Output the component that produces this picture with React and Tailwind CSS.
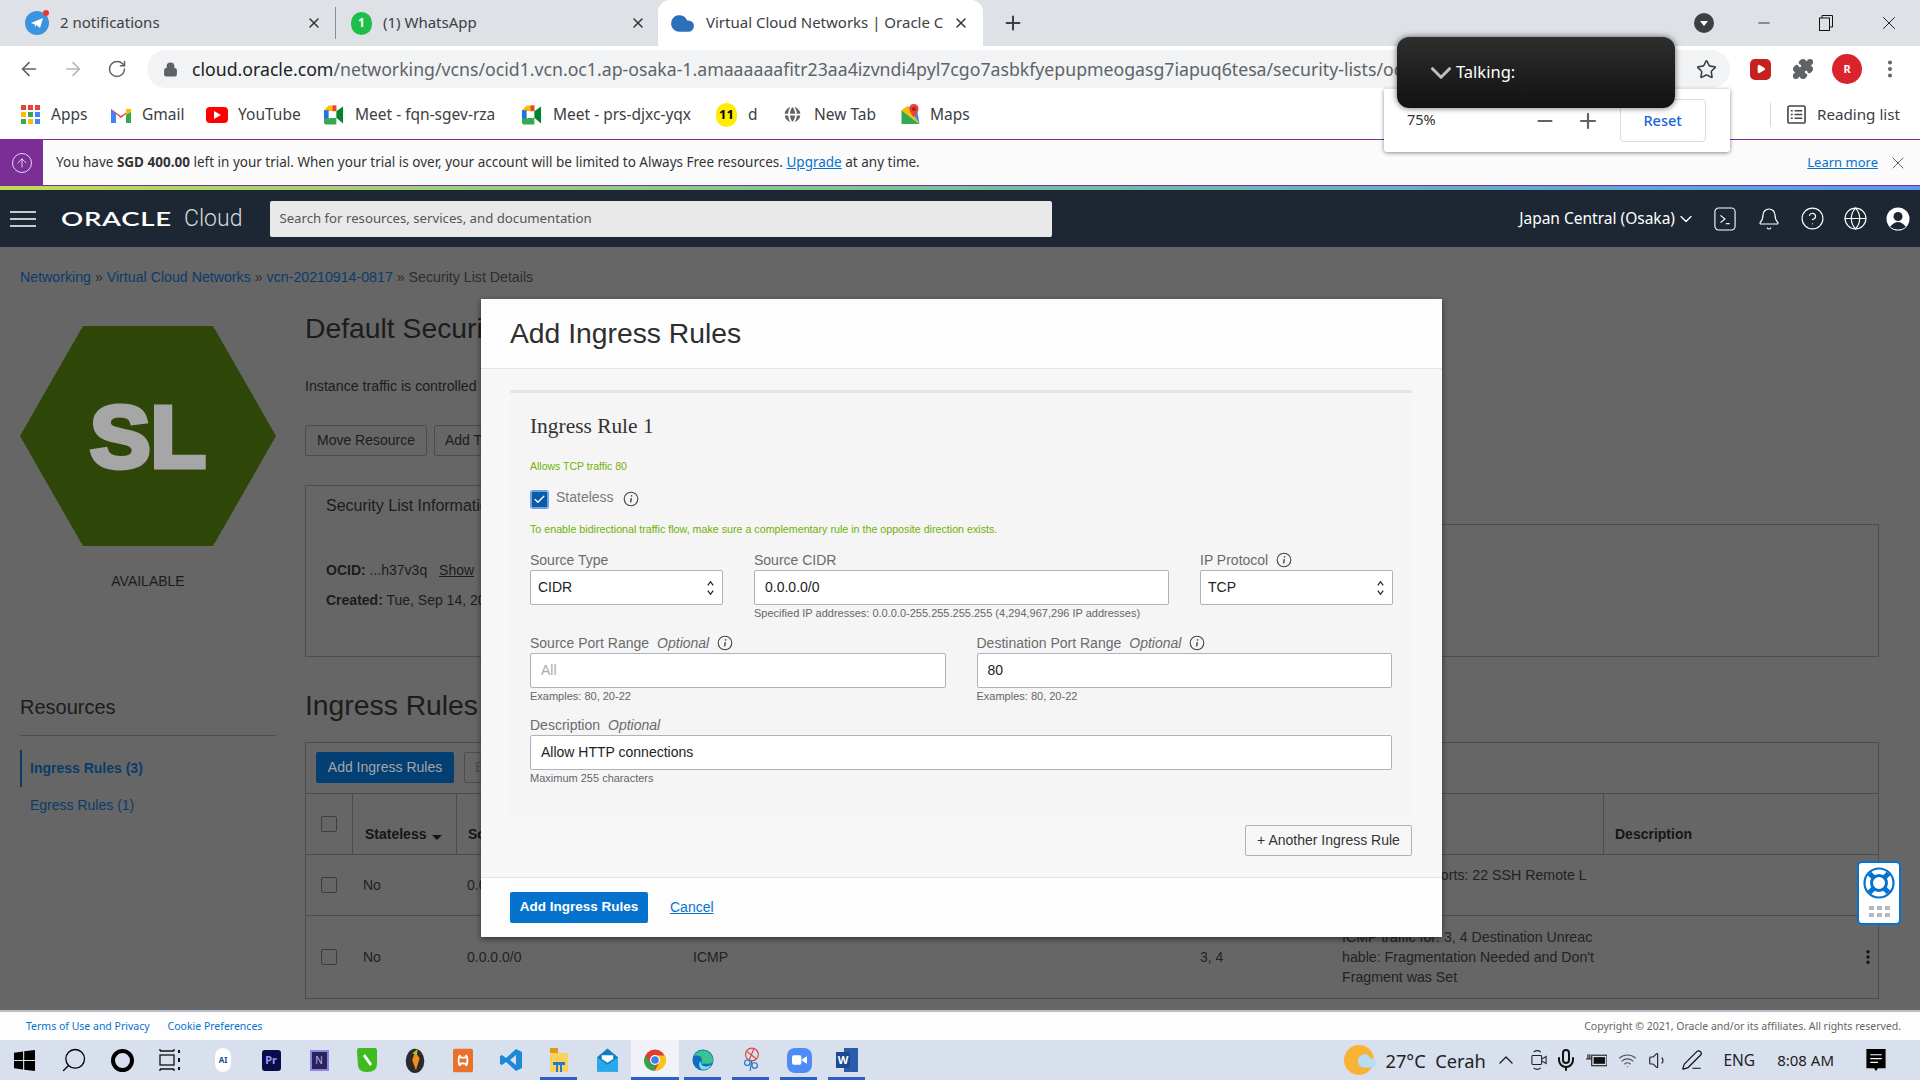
import React from 'react';
import { ArrowLeft, ArrowRight, RotateCw, Lock, Star, EllipsisVertical, Plus, Minus, X, Bell, CircleHelp, Globe, ChevronDown, ChevronUp, Check, Search, Puzzle, Cloud, ArrowUp, Mic, Wifi, Volume1, PenLine, Play } from 'lucide-react';

const chrome = { fontFamily: '"Noto Sans", sans-serif' };

const Info = ({ className = '' }) => (
  <svg viewBox="0 0 16 16" className={`w-[16px] h-[16px] shrink-0 ${className}`} fill="none" stroke="#444" strokeWidth="1.1">
    <circle cx="8" cy="8" r="6.8" />
    <path d="M8.3 7.2 L7.6 11.4" strokeWidth="1.4" />
    <circle cx="8.6" cy="4.9" r="0.8" fill="#444" stroke="none" />
  </svg>
);

const Updown = () => (
  <svg viewBox="0 0 10 20" className="w-[9px] h-[18px]" fill="none" stroke="#222" strokeWidth="1.4">
    <path d="M2 7 L5 3 L8 7" />
    <path d="M2 13 L5 17 L8 13" />
  </svg>
);

const Tab = ({ icon, title, width, pad, sep }) => (
  <div className={`flex items-center shrink-0 ${pad} ${sep ? 'border-r border-[#8a8d91] h-[32px]' : 'h-[46px]'}`} style={{ width }}>
    {icon}
    <span className="ml-[11px] -mt-[2px] text-[15px] text-[#3c4043] flex-1 whitespace-nowrap overflow-hidden">{title}</span>
    <X size={16} strokeWidth={2.2} className="text-[#333] ml-1 shrink-0" />
  </div>
);

const Bookmark = ({ icon, label, className = '' }) => (
  <div className={`flex items-center gap-[10px] h-full shrink-0 ${className}`}>
    {icon}
    <span className="text-[15.5px] text-[#3c4043] whitespace-nowrap">{label}</span>
  </div>
);

const MeetIcon = () => (
  <svg viewBox="0 0 22 20" className="w-[21px] h-[20px]">
    <path d="M1 5 L6 0 H14 V6 H7 V14 H1 Z" fill="#fbbc04" />
    <path d="M1 5 H6 V14 H1 Z" fill="#1a73e8" />
    <path d="M1 14 H7 V13 H14 V20 H4 Q1 20 1 17 Z" fill="#34a853" />
    <path d="M6 6 H14 V13 H6 Z" fill="#fff" />
    <path d="M14 6 L21 1 V19 L14 13 Z" fill="#00832d" />
    <path d="M14 0 V6 L10 6 V0 Z" fill="#ea4335" />
  </svg>
);

const AppsIcon = () => (
  <div className="grid grid-cols-3 gap-[2px] w-[19px]">
    {['#ea4335', '#ea4335', '#ea4335', '#fbbc04', '#34a853', '#4285f4', '#34a853', '#fbbc04', '#4285f4'].map((c, i) => (
      <span key={i} className="w-[5px] h-[5px]" style={{ background: c }} />
    ))}
  </div>
);

const Field = ({ label, optional, info, hint, value, placeholder, select }) => (
  <div className="min-w-0">
    <div className="flex items-center h-[20px] text-[14px] text-[#6b6b6b]">
      <span>{label}</span>
      {optional && <i className="ml-[8px]">Optional</i>}
      {info && <Info className="ml-[8px]" />}
    </div>
    <div className={`h-[35px] bg-white border border-[#aeb2bd] rounded-[2px] flex items-center justify-between text-[14px] ${select ? 'pl-[7px] pr-[7px]' : 'pl-[10px]'}`}>
      {value ? <span className="text-[#222]">{value}</span> : <span className="text-[#aaa]">{placeholder}</span>}
      {select && <Updown />}
    </div>
    {hint && <div className="h-[16px] leading-[16px] text-[11px] text-[#666] whitespace-nowrap">{hint}</div>}
  </div>
);

const HeaderRow = () => (
  <div className="flex h-[62px] border-t border-b border-[#4d4d4d] text-[14px] font-bold text-[#151515]">
    <div className="w-[47px] border-r border-[#4d4d4d] pl-[15px] pt-[22px]">
      <div className="w-[16px] h-[16px] border border-[#3d3d3d] rounded-[2px]" />
    </div>
    <div className="w-[104px] border-r border-[#4d4d4d] pl-[12px] flex items-end pb-[9px] gap-[6px]">
      Stateless
      <span className="mb-[5px] border-x-[5px] border-x-transparent border-t-[5px] border-t-[#151515]" />
    </div>
    <div className="w-[1147px] border-r border-[#4d4d4d] pl-[11px] flex items-end pb-[9px]">Source</div>
    <div className="flex-1 pl-[11px] flex items-end pb-[9px]">Description</div>
  </div>
);

const DataRow = ({ height, source, proto, code, lines }) => (
  <div className="flex items-center border-b border-[#4d4d4d] text-[14px] text-[#222]" style={{ height }}>
    <div className="w-[47px] pl-[15px]">
      <div className="w-[16px] h-[16px] border border-[#3d3d3d] rounded-[2px]" />
    </div>
    <div className="w-[114px] pl-[10px]">No</div>
    <div className="w-[226px]">{source}</div>
    <div className="w-[507px]">{proto}</div>
    <div className="w-[142px]">{code}</div>
    <div className="w-[272px] leading-[20px] text-[14.2px]">
      {lines.map((l) => <div key={l} className="whitespace-nowrap">{l}</div>)}
    </div>
    <div className="flex-1 flex justify-end pr-[1px]">
      {code === '3, 4' && <EllipsisVertical size={18} strokeWidth={2.5} className="text-[#111]" />}
    </div>
  </div>
);

const Sidebar = () => (
  <div className="w-[256px] shrink-0">
    <svg viewBox="0 0 256 220" className="mt-[39px] w-[256px] h-[220px] block">
      <polygon points="0,110 63,0 193,0 256,110 193,220 63,220" fill="#2e4708" />
      <text x="128" y="141" textAnchor="middle" fill="#a6a6a6" stroke="#a6a6a6" strokeWidth="5" fontSize="88" fontWeight="700" textLength="116" lengthAdjust="spacingAndGlyphs" fontFamily="Liberation Sans, sans-serif">SL</text>
    </svg>
    <div className="mt-[25px] h-[20px] leading-[20px] text-center text-[14px] text-[#1c1c1c]">AVAILABLE</div>
    <div className="mt-[102px] h-[43px] border-b border-[#4d4d4d] text-[20px] leading-[28px] text-[#1c1c1c]">Resources</div>
    <div className="mt-[14px] h-[37px] border-l-[2px] border-[#0a3b6b] pl-[8px] flex items-center text-[14px] font-bold text-[#0a3b6b]">Ingress Rules (3)</div>
    <div className="h-[37px] pl-[10px] flex items-center text-[14px] text-[#0a3b6b]">Egress Rules (1)</div>
  </div>
);

const PageContent = () => (
  <div className="ml-[29px] w-[1574px] shrink-0 text-[#1c1c1c]">
    <h1 className="mt-[23px] h-[36px] leading-[36px] text-[28.3px] whitespace-nowrap">Default Security List for vcn-20210914-0817</h1>
    <p className="mt-[30px] h-[20px] leading-[20px] text-[14.2px] whitespace-nowrap">Instance traffic is controlled by firewall rules</p>
    <div className="mt-[29px] flex gap-[7px] text-[14px]">
      <div className="w-[122px] h-[31px] border border-[#4d4d4d] rounded-[2px] flex items-center justify-center">Move Resource</div>
      <div className="w-[90px] h-[31px] border border-[#4d4d4d] rounded-[2px] pl-[10px] flex items-center">Add Tags</div>
    </div>
    <div className="mt-[29px] w-[300px] h-[40px] -mb-px relative z-10 bg-[#666666] border border-b-0 border-[#4d4d4d] pl-[20px] flex items-center text-[16px]">Security List Information</div>
    <div className="h-[133px] border border-[#4d4d4d] pl-[20px] pt-[35px] text-[14px]">
      <div className="h-[20px] leading-[20px]"><b>OCID:</b> ...h37v3q <u className="ml-[8px]">Show</u></div>
      <div className="mt-[10px] h-[20px] leading-[20px]"><b>Created:</b> Tue, Sep 14, 2021</div>
    </div>
    <h2 className="mt-[30px] h-[36px] leading-[36px] text-[28.3px]">Ingress Rules</h2>
    <div className="mt-[19px] border-x border-t border-[#4d4d4d] rounded-t-[2px]">
      <div className="h-[50px] flex items-start pt-[9px] pl-[10px] gap-[10px] text-[14px]">
        <div className="w-[138px] h-[31px] bg-[#043f73] text-[#a5a5a5] rounded-[2px] flex items-center justify-center">Add Ingress Rules</div>
        <div className="w-[60px] h-[31px] border border-[#4d4d4d] rounded-[2px] text-[#4d4d4d] pl-[10px] flex items-center">Edit</div>
      </div>
      <HeaderRow />
      <DataRow height={61} source="0.0.0.0/0" proto="TCP" code="22" lines={['TCP traffic for ports: 22 SSH Remote L', 'ogin Protocol']} />
      <DataRow height={83} source="0.0.0.0/0" proto="ICMP" code="3, 4" lines={['ICMP traffic for: 3, 4 Destination Unreac', "hable: Fragmentation Needed and Don't", 'Fragment was Set']} />
    </div>
  </div>
);

const Modal = () => (
  <div className="absolute z-20 left-[481px] top-[52px] w-[961px] h-[638px] bg-[#f7f7f7] shadow-[0_2px_6px_rgba(0,0,0,0.5)] flex flex-col rounded-[1px]">
    <div className="h-[70px] shrink-0 bg-[#fdfdfd] border-b border-[#e4e4e4] pl-[29px] flex items-center text-[28.3px] text-[#2e2e2e]">Add Ingress Rules</div>
    <div className="flex-1 pl-[29px] pr-[30px] pt-[21px]">
      <div className="h-[427px] bg-[#f5f5f6] border-t-[3px] border-[#e3e3e8] rounded-t-[2px] px-[20px] pt-[19px]">
        <div className="h-[28px] text-[21.4px] leading-[28px] text-[#333]" style={{ fontFamily: '"Liberation Serif", serif' }}>Ingress Rule 1</div>
        <div className="mt-[19px] h-[14px] leading-[14px] text-[10.5px] text-[#6fb300]">Allows TCP traffic 80</div>
        <div className="mt-[16px] h-[20px] flex items-center">
          <div className="w-[19px] h-[19px] rounded-[3px] bg-[#0a5aa8] border-[2px] border-[#6aa5e6] flex items-center justify-center">
            <Check size={13} strokeWidth={2.5} className="text-white" />
          </div>
          <span className="ml-[7px] text-[14px] text-[#7a7a7a] -mt-[3px]">Stateless</span>
          <Info className="ml-[9px]" />
        </div>
        <div className="mt-[13px] h-[14px] leading-[14px] text-[10.7px] text-[#6fb300] whitespace-nowrap">To enable bidirectional traffic flow, make sure a complementary rule in the opposite direction exists.</div>
        <div className="mt-[14px] grid grid-cols-[193px_415px_193px] gap-x-[31px]">
          <Field label="Source Type" value="CIDR" select />
          <Field label="Source CIDR" value="0.0.0.0/0" hint="Specified IP addresses: 0.0.0.0-255.255.255.255 (4,294,967,296 IP addresses)" />
          <Field label="IP Protocol" info value="TCP" select />
        </div>
        <div className="mt-[12px] grid grid-cols-2 gap-x-[31px]">
          <Field label="Source Port Range" optional info placeholder="All" hint="Examples: 80, 20-22" />
          <Field label="Destination Port Range" optional info value="80" hint="Examples: 80, 20-22" />
        </div>
        <div className="mt-[11px]">
          <Field label="Description" optional value="Allow HTTP connections" hint="Maximum 255 characters" />
        </div>
      </div>
      <div className="mt-[8px] flex justify-end">
        <div className="w-[167px] h-[31px] border border-[#aeb2bd] rounded-[2px] bg-[#f7f7f7] flex items-center justify-center text-[14px] text-[#333]">+ Another Ingress Rule</div>
      </div>
    </div>
    <div className="h-[60px] shrink-0 bg-[#fdfdfd] border-t border-[#e4e4e4] pl-[29px] flex items-center">
      <div className="w-[138px] h-[31px] bg-[#0572ce] rounded-[2px] flex items-center justify-center text-[13.5px] font-bold text-white">Add Ingress Rules</div>
      <a className="ml-[22px] text-[14px] text-[#0572ce] underline">Cancel</a>
    </div>
  </div>
);

const HelpWidget = () => (
  <div className="absolute z-20 left-[1857px] top-[614px] w-[44px] h-[64px] bg-white border-[2px] border-[#0572ce] rounded-[5px] flex flex-col items-center pt-[4px]">
    <svg viewBox="0 0 32 32" className="w-[32px] h-[32px]" fill="none" stroke="#0572ce">
      <circle cx="16" cy="16" r="14.5" strokeWidth="2.2" />
      <circle cx="16" cy="16" r="7.5" strokeWidth="3" />
      <path d="M6.5 6.5 L11 11 M25.5 6.5 L21 11 M6.5 25.5 L11 21 M25.5 25.5 L21 21" strokeWidth="5" />
    </svg>
    <div className="mt-[7px] grid grid-cols-3 gap-x-[3px] gap-y-[3px]">
      {[0, 1, 2, 3, 4, 5].map((i) => <span key={i} className="w-[5px] h-[4px] bg-[#b5b8c0]" />)}
    </div>
  </div>
);

const TaskIcon = ({ children, active, bar }) => (
  <div className={`relative w-[48px] h-full shrink-0 flex items-center justify-center ${active ? 'bg-[#f1f2f7]' : ''}`}>
    {children}
    {bar && <span className={`absolute bottom-0 h-[3px] bg-[#2b5fc7] ${active ? 'inset-x-0' : 'left-[5px] right-[6px]'}`} />}
  </div>
);

const Taskbar = () => (
  <div className="h-[40px] shrink-0 bg-[#d8dfed] flex items-center" style={chrome}>
    <TaskIcon>
      <svg viewBox="0 0 22 22" className="w-[21px] h-[21px]" fill="#000"><path d="M0 3 L9.5 1.6 V10.4 H0 Z M10.7 1.4 L22 0 V10.4 H10.7 Z M0 11.6 H9.5 V20.4 L0 19 Z M10.7 11.6 H22 V22 L10.7 20.6 Z" /></svg>
    </TaskIcon>
    <div className="w-[2px]" />
    <TaskIcon><Search size={28} strokeWidth={1.1} className="text-black -scale-x-100" /></TaskIcon>
    <TaskIcon><span className="w-[23px] h-[23px] rounded-full border-[4px] border-black" /></TaskIcon>
    <TaskIcon>
      <svg viewBox="0 0 24 24" className="w-[24px] h-[24px]" fill="none" stroke="#111" strokeWidth="1.3">
        <rect x="2" y="7" width="14" height="10" />
        <path d="M2 3 H16 M2 21 H16 M2 1 V3 M16 1 V3 M2 21 V23 M16 21 V23" />
        <path d="M21 2 V5 M21 10 V14 M21 19 V22" strokeWidth="2" />
      </svg>
    </TaskIcon>
    <div className="w-[5px]" />
    <TaskIcon><span className="w-[16px] h-[24px] rounded-[8px] bg-white flex items-center justify-center text-[8px] font-bold text-[#124a8c]">AI</span></TaskIcon>
    <TaskIcon><span className="w-[19px] h-[21px] rounded-[3px] bg-[#0b0b48] text-[#9a9aff] text-[11px] font-bold flex items-center justify-center">Pr</span></TaskIcon>
    <TaskIcon><span className="w-[19px] h-[21px] border-[2px] border-[#8d84e8] bg-[#2a2456] text-[#b9b0ff] text-[10px] flex items-center justify-center">N</span></TaskIcon>
    <TaskIcon>
      <svg viewBox="0 0 20 24" className="w-[20px] h-[24px]"><path d="M2 0 H18 Q20 0 20 3 V16 Q20 24 10 24 Q2 24 1 18 L0 3 Q0 0 2 0 Z" fill="#3dbb1f" /><path d="M8 6 L15 16 L13 18 L6 8 Z" fill="#fff" /></svg>
    </TaskIcon>
    <TaskIcon>
      <svg viewBox="0 0 20 28" className="w-[20px] h-[26px]"><ellipse cx="10" cy="15" rx="10" ry="13" fill="#2b2b2b" /><path d="M10 5 L15 12 L11 25 L7 14 Z" fill="#f68b1f" /><path d="M7 7 L13 2 L12 8 Z" fill="#9acd32" /></svg>
    </TaskIcon>
    <TaskIcon>
      <svg viewBox="0 0 22 26" className="w-[20px] h-[25px]"><rect width="22" height="26" rx="2" fill="#e8712b" /><path d="M6 8 Q11 12 16 8 M6 18 Q11 14 16 18 M8 7 Q4 13 8 19 M14 7 Q18 13 14 19" stroke="#fff" strokeWidth="2" fill="none" /></svg>
    </TaskIcon>
    <TaskIcon>
      <svg viewBox="0 0 24 24" className="w-[24px] h-[24px]"><path d="M17 1 L23 4 V20 L17 23 L7 14 L3 17 L1 16 V8 L3 7 L7 10 Z M17 7 L11 12 L17 17 Z" fill="#1c8ad6" /></svg>
    </TaskIcon>
    <TaskIcon bar>
      <svg viewBox="0 0 20 24" className="w-[20px] h-[24px]"><path d="M1 0 H9 V5 H1 Z" fill="#dd9a15" /><path d="M1 5 H19 V24 H1 Z" fill="#fcd25f" /><path d="M7 14 H13 V24 H11 V17 H9 V24 H7 Z" fill="#2a78c8" /><path d="M4 14 H16 V17 H4 Z" fill="#2a78c8" /></svg>
    </TaskIcon>
    <TaskIcon>
      <svg viewBox="0 0 22 24" className="w-[21px] h-[24px]"><path d="M0 9 L11 0 L22 9 V24 H0 Z" fill="#0f7dc2" /><path d="M0 9 L11 17 L22 9 V24 H0 Z" fill="#28a8ea" /><path d="M5 7 H17 V11 L11 15 L5 11 Z" fill="#fff" /></svg>
    </TaskIcon>
    <TaskIcon active bar>
      <svg viewBox="0 0 24 24" className="w-[22px] h-[22px]">
        <circle cx="12" cy="12" r="11.5" fill="#e33b2e" />
        <path d="M12 12 L2 19 A11.5 11.5 0 0 0 12 23.5 Z M2 19 A11.5 11.5 0 0 1 1.7 7 L7 15 Z" fill="#2ea44f" />
        <path d="M12 7 H23 A11.5 11.5 0 0 1 12 23.5 L17 14 Z" fill="#fbc116" />
        <circle cx="12" cy="12" r="5.5" fill="#fff" />
        <circle cx="12" cy="12" r="4.2" fill="#3b82f0" />
      </svg>
    </TaskIcon>
    <TaskIcon bar>
      <svg viewBox="0 0 24 24" className="w-[22px] h-[24px]">
        <circle cx="12" cy="12" r="11.5" fill="#0f6fbc" />
        <path d="M2 8 A11 11 0 0 1 23 12 Q23 16 18 16 H10 Q12 11 9 8 Q5 6 2 8 Z" fill="#39c38f" />
        <path d="M9 13 Q10 20 17 19 Q20 18 21 17 Q18 24 10 22 Q6 18 9 13 Z" fill="#7ee0ef" />
      </svg>
    </TaskIcon>
    <TaskIcon bar>
      <svg viewBox="0 0 24 28" className="w-[22px] h-[26px]" fill="none" stroke="#dc4a45" strokeWidth="1.3">
        <circle cx="13" cy="8" r="7" /><path d="M8 5 L18 13 M15 2 L10 14" />
        <circle cx="8" cy="17" r="3" stroke="#2a78c8" /><circle cx="16" cy="20" r="3" stroke="#2a78c8" /><path d="M13 14 L11 26" stroke="#2a78c8" />
      </svg>
    </TaskIcon>
    <TaskIcon bar>
      <div className="w-[25px] h-[25px] rounded-[8px] bg-[#4d8cf5] flex items-center justify-center">
        <svg viewBox="0 0 16 10" className="w-[15px] h-[10px]" fill="#fff"><rect width="10" height="10" rx="2" /><path d="M11 4 L16 1 V9 L11 6 Z" /></svg>
      </div>
    </TaskIcon>
    <TaskIcon bar>
      <div className="relative w-[22px] h-[24px]">
        <span className="absolute right-0 top-0 w-[14px] h-[24px] bg-[#2a5cab]" />
        <span className="absolute left-0 top-[4px] w-[14px] h-[16px] bg-[#1a4a93] text-white text-[11px] font-bold flex items-center justify-center">W</span>
      </div>
    </TaskIcon>
    <div className="flex-1" />
    <div className="w-[30px] h-[30px] rounded-full bg-[#f9b233] relative flex items-center justify-center mr-[11px]">
      <Cloud size={20} className="absolute right-[-3px] top-[6px] text-[#b9dcf5] fill-[#b9dcf5]" />
    </div>
    <span className="text-[18.3px] text-[#222] w-[109px] whitespace-nowrap mt-[1px]">27°C&nbsp; Cerah</span>
    <ChevronUp size={24} strokeWidth={1.4} className="text-[#222] mr-[13px]" />
    <svg viewBox="0 0 18 24" className="w-[16px] h-[22px] mr-[7px]" fill="none" stroke="#222" strokeWidth="1.2"><rect x="1" y="7" width="11" height="10" rx="1" /><path d="M12 11 L17 8 V16 L12 13" /><path d="M3 3 Q7 0 11 3 M3 21 Q7 24 11 21" /></svg>
    <Mic size={24} strokeWidth={2} className="text-[#111] mr-[8px]" />
    <svg viewBox="0 0 22 16" className="w-[21px] h-[16px] mr-[11px]"><rect x="6" y="3" width="16" height="11" fill="none" stroke="#222" strokeWidth="1.2" /><rect x="8" y="5" width="12" height="7" fill="#111" /><path d="M0 7 H6 M2 2 V7 M4 2 V7" stroke="#222" strokeWidth="1.2" /></svg>
    <Wifi size={19} strokeWidth={1.4} className="text-[#555] mr-[11px]" />
    <Volume1 size={21} strokeWidth={1.3} className="text-[#222] mr-[12px]" />
    <PenLine size={22} strokeWidth={1.3} className="text-[#111] mr-[20px]" />
    <span className="text-[15.5px] text-[#222] mr-[22px] mt-[1px]">ENG</span>
    <span className="text-[15px] text-[#222] mr-[32px] whitespace-nowrap">8:08 AM</span>
    <svg viewBox="0 0 20 24" className="w-[20px] h-[23px] mr-[34px]"><path d="M0 0 H20 V20 H12 L10 23 L8 20 H0 Z" fill="#000" /><path d="M4 6 H16 M4 10 H16 M4 14 H12" stroke="#fff" strokeWidth="1.2" /></svg>
  </div>
);

export default function App() {
  return (
    <div className="w-[1920px] h-screen overflow-hidden flex flex-col relative bg-white" style={{ fontFamily: '"Liberation Sans", Arial, sans-serif' }}>
      {/* browser chrome */}
      <div style={chrome}>
        <div className="h-[46px] bg-[#dee1e6] flex items-center">
          <Tab width={336} pad="pl-[25px] pr-[13px]" sep title="2 notifications" icon={
            <span className="relative w-[24px] h-[24px] rounded-full bg-[#3a94e0] flex items-center justify-center shrink-0">
              <svg viewBox="0 0 14 14" className="w-[14px] h-[14px]"><path d="M1 7 L13 2 L10 12 L6.5 9 L5 11 L4.8 8.4 Z" fill="#fff" /></svg>
              <span className="absolute -top-[1px] right-[0px] w-[6px] h-[6px] rounded-full bg-[#e8362d]" />
            </span>
          } />
          <Tab width={322} pad="pl-[15px] pr-[12px]" title="(1) WhatsApp" icon={
            <span className="w-[21px] h-[23px] rounded-full bg-[#1ebe4a] text-white text-[12px] font-bold flex items-center justify-center shrink-0">1</span>
          } />
          <Tab width={325} pad="bg-white rounded-t-xl pl-[16px] pr-[14px]" title="Virtual Cloud Networks | Oracle C" icon={
            <Cloud size={25} className="text-[#2c6fbb] fill-[#2c6fbb] shrink-0 ml-[-4px]" />
          } />
          <Plus size={22} strokeWidth={2.2} className="text-[#3c4043] ml-[19px]" />
          <div className="flex-1" />
          <span className="w-[20px] h-[20px] rounded-full bg-[#3c4043] flex items-center justify-center mr-[41px]">
            <span className="border-x-[4px] border-x-transparent border-t-[5px] border-t-white" />
          </span>
          <Minus size={18} strokeWidth={1.1} className="text-[#111] mr-[46px]" />
          <svg viewBox="0 0 14 16" className="w-[14px] h-[16px] mr-[45px]" fill="none" stroke="#111" strokeWidth="1"><rect x="0.5" y="3" width="10" height="12.5" /><path d="M3 3 V0.5 H13.5 V12 H10.5" /></svg>
          <X size={22} strokeWidth={1} className="text-[#111] mr-[20px]" />
        </div>
        <div className="h-[46px] bg-white flex items-center pl-[18px]">
          <ArrowLeft size={22} strokeWidth={1.8} className="text-[#5f6368]" />
          <ArrowRight size={22} strokeWidth={1.8} className="text-[#b5b7ba] ml-[22px]" />
          <RotateCw size={20} strokeWidth={1.8} className="text-[#5f6368] ml-[23px]" />
          <div className="ml-[20px] w-[1583px] h-[38px] rounded-full bg-[#f1f3f4] flex items-center pl-[16px] pr-[14px] overflow-hidden">
            <Lock size={15} strokeWidth={2.5} className="text-[#5f6368] shrink-0 fill-[#5f6368]" />
            <span className="ml-[14px] text-[17.7px] text-[#5f6368] whitespace-nowrap overflow-hidden flex-1">
              <span className="text-[#202124]">cloud.oracle.com</span>/networking/vcns/ocid1.vcn.oc1.ap-osaka-1.amaaaaaafitr23aa4izvndi4pyl7cgo7asbkfyepupmeogasg7iapuq6tesa/security-lists/ocid1.securitylist
            </span>
            <Star size={21} strokeWidth={1.8} className="text-[#3c4043] shrink-0 ml-[6px] -mr-[1px]" />
          </div>
          <span className="ml-[20px] w-[21px] h-[21px] rounded-[5px] bg-[#c5221f] flex items-center justify-center">
            <Play size={10} className="text-white fill-white" />
          </span>
          <Puzzle size={22} className="ml-[21px] text-[#5f6368] fill-[#5f6368]" />
          <span className="ml-[18px] w-[30px] h-[30px] rounded-full bg-[#d9232d] text-white text-[11px] font-bold flex items-center justify-center">R</span>
          <EllipsisVertical size={22} strokeWidth={2.4} className="ml-[17px] text-[#5f6368]" />
        </div>
        <div className="h-[47px] bg-white flex items-center pl-[21px] pb-[2px]">
          <Bookmark icon={<AppsIcon />} label="Apps" className="w-[90px] gap-[11px]" />
          <Bookmark className="w-[95px] gap-[11px]" label="Gmail" icon={
            <svg viewBox="0 0 20 16" className="w-[20px] h-[16px]">
              <path d="M0 2 L10 9 L20 2 V16 H15 V7 L10 11 L5 7 V16 H0 Z" fill="#ea4335" />
              <path d="M0 2 V16 H5 V7 Z" fill="#4285f4" /><path d="M20 2 V16 H15 V7 Z" fill="#34a853" /><path d="M15 2 L20 2 V5 L15 8 Z" fill="#fbbc04" />
            </svg>
          } />
          <Bookmark className="w-[117px] gap-[10px]" label="YouTube" icon={
            <span className="w-[22px] h-[16px] rounded-[4px] bg-[#f00] flex items-center justify-center"><span className="border-y-[4px] border-y-transparent border-l-[7px] border-l-white" /></span>
          } />
          <Bookmark className="w-[198px] gap-[11px]" icon={<MeetIcon />} label="Meet - fqn-sgev-rza" />
          <Bookmark className="w-[195px] gap-[11px]" icon={<MeetIcon />} label="Meet - prs-djxc-yqx" />
          <Bookmark className="w-[66px] gap-[11px]" label="d" icon={
            <span className="w-[21px] h-[24px] rounded-full bg-[#ffec00] text-black text-[13px] font-bold flex items-center justify-center">11</span>
          } />
          <Bookmark className="w-[117px] gap-[11px]" icon={<Globe size={21} className="text-white fill-[#5f6368]" />} label="New Tab" />
          <Bookmark className="gap-[10px]" label="Maps" icon={
            <svg viewBox="0 0 20 22" className="w-[21px] h-[22px]">
              <path d="M2 6 L20 20 H2 Z" fill="#34a853" /><path d="M2 6 L8 2 L20 20 Z" fill="#fbbc04" /><path d="M8 2 L18 8 L20 20 Z" fill="#4285f4" />
              <path d="M14 0 Q19 0 19 5 Q19 8 14 13 Q10 8 10 5 Q10 0 14 0 Z" fill="#ea4335" /><circle cx="14.5" cy="5" r="2" fill="#a52714" />
            </svg>
          } />
          <div className="flex-1" />
          <span className="h-[24px] border-l border-[#d5d7da] mr-[16px]" />
          <svg viewBox="0 0 20 20" className="w-[19px] h-[19px] mr-[11px]" fill="none" stroke="#444" strokeWidth="1.7">
            <rect x="1" y="1" width="18" height="18" rx="1.5" /><path d="M4 6 H6 M8 6 H16 M4 10 H6 M8 10 H16 M4 14 H6 M8 14 H16" />
          </svg>
          <span className="text-[15.2px] text-[#3c4043] mr-[20px] whitespace-nowrap">Reading list</span>
        </div>
      </div>

      {/* trial banner */}
      <div className="h-[47px] border-y border-[#7a2e96] bg-[#fbfbfb] flex items-center shrink-0" style={chrome}>
        <div className="w-[43px] h-full bg-[#7a2e96] flex items-center justify-center">
          <span className="w-[20px] h-[20px] rounded-full border border-white/80 flex items-center justify-center">
            <ArrowUp size={14} strokeWidth={1.3} className="text-white" />
          </span>
        </div>
        <p className="ml-[13px] text-[13.5px] text-[#333] whitespace-nowrap">You have <b>SGD 400.00</b> left in your trial. When your trial is over, your account will be limited to Always Free resources. <a className="text-[#0572ce] underline">Upgrade</a> at any time.</p>
        <div className="flex-1" />
        <a className="text-[13px] text-[#0572ce] underline">Learn more</a>
        <X size={20} strokeWidth={1} className="text-[#444] ml-[10px] mr-[12px]" />
      </div>
      <div className="h-[4px] shrink-0 bg-gradient-to-r from-[#bcdc54] via-[#78c19b] to-[#5a98ee]" />

      {/* oracle nav */}
      <div className="h-[57px] shrink-0 bg-[#1c2733] flex items-center text-white">
        <svg viewBox="0 0 26 16" className="w-[26px] h-[16px] ml-[10px]" stroke="#fff" strokeWidth="1.3"><path d="M0 1 H26 M0 8 H26 M0 15 H26" /></svg>
        <span className="ml-[25px] -mt-[2px] w-[117px] inline-block origin-left scale-x-[1.38] text-[20px] font-semibold tracking-[0.5px] whitespace-nowrap" style={{ fontFamily: 'Lato, sans-serif' }}>ORACLE</span>
        <span className="ml-[6px] mt-[1px] text-[23px] font-light text-[#d5d7da]" style={{ fontFamily: 'Roboto, sans-serif' }}>Cloud</span>
        <div className="ml-[28px] w-[782px] h-[36px] rounded-[2px] bg-[#e9e9e9] flex items-center pl-[9px] text-[13.2px] text-[#555]" style={chrome}>Search for resources, services, and documentation</div>
        <div className="flex-1" />
        <span className="text-[15.5px] whitespace-nowrap" style={chrome}>Japan Central (Osaka)</span>
        <ChevronDown size={20} strokeWidth={1.6} className="ml-[1px] mr-[18px]" />
        <svg viewBox="0 0 24 26" className="w-[22px] h-[24px] mr-[21px]" fill="none" stroke="#fff" strokeWidth="1.2"><rect x="1" y="1" width="22" height="24" rx="4" /><path d="M7 9 L12 13 L7 17 M13 18 H17" /></svg>
        <Bell size={24} strokeWidth={1.2} className="mr-[19px]" />
        <CircleHelp size={25} strokeWidth={1.1} className="mr-[18px]" />
        <Globe size={25} strokeWidth={1.1} className="mr-[18px]" />
        <svg viewBox="0 0 24 24" className="w-[24px] h-[24px] mr-[10px]"><circle cx="12" cy="12" r="11.5" fill="#fff" /><circle cx="12" cy="9.5" r="4.5" fill="#1c2733" /><path d="M4 20 Q12 10 20 20 Q12 25 4 20 Z" fill="#1c2733" /></svg>
      </div>

      {/* console page under the dialog */}
      <div className="relative flex-1 min-h-0 bg-[#666666] overflow-hidden">
        <div className="pl-[20px] pt-[20px]">
          <div className="h-[20px] leading-[20px] text-[14.2px] text-[#2d2d2d] whitespace-nowrap">
            <span className="text-[#0a3b6b]">Networking</span> » <span className="text-[#0a3b6b]">Virtual Cloud Networks</span> » <span className="text-[#0a3b6b]">vcn-20210914-0817</span> » Security List Details
          </div>
          <div className="flex">
            <Sidebar />
            <PageContent />
          </div>
        </div>
        <Modal />
        <HelpWidget />
      </div>

      {/* footer */}
      <div className="h-[30px] shrink-0 bg-[#fdfdfd] border-t-[2px] border-[#b7bcc6] flex items-center pl-[26px] pr-[19px] pt-[1px] text-[10.5px]" style={chrome}>
        <a className="text-[#0572ce]">Terms of Use and Privacy</a>
        <a className="ml-[18px] text-[#0572ce]">Cookie Preferences</a>
        <div className="flex-1" />
        <span className="text-[#666]">Copyright © 2021, Oracle and/or its affiliates. All rights reserved.</span>
      </div>

      <Taskbar />

      {/* zoom bubble + talking overlay sit on top of the browser */}
      <div className="absolute left-[1384px] top-[89px] w-[346px] h-[63px] bg-white rounded-b-[3px] shadow-[0_1px_4px_rgba(0,0,0,0.45)] flex items-center pl-[23px]" style={chrome}>
        <span className="text-[14.5px] text-[#333] mt-[-1px]">75%</span>
        <Minus size={22} strokeWidth={2.4} className="ml-[98px] text-[#5f6368]" />
        <Plus size={24} strokeWidth={2.2} className="ml-[20px] text-[#5f6368]" />
        <div className="ml-[20px] w-[86px] h-[43px] border border-[#dadce0] rounded-[4px] flex items-center justify-center text-[14.5px] font-medium text-[#1a66d6]">Reset</div>
      </div>
      <div className="absolute left-[1397px] top-[37px] w-[278px] h-[71px] rounded-[12px] bg-gradient-to-b from-[#2e2e2e] to-[#121212] shadow-[0_0_6px_rgba(0,0,0,0.6)] flex items-center pl-[27px]" style={chrome}>
        <ChevronDown size={34} strokeWidth={2.2} className="text-[#bdbdbd] -mr-[2px]" />
        <span className="text-[16.5px] text-white">Talking:</span>
      </div>
    </div>
  );
}
